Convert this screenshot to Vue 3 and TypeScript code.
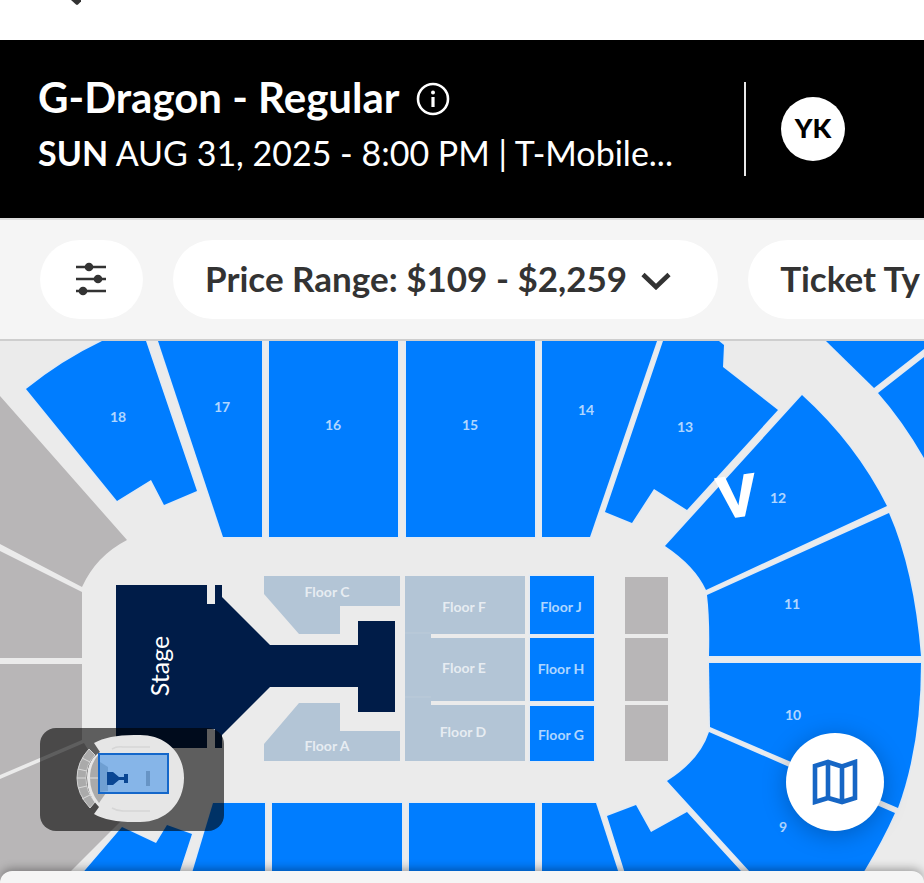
<script setup lang="ts">
interface Shape {
  id: string
  d: string
}
interface Label {
  text: string
  x: number
  y: number
}

const closedSections: Shape[] = [
  { id: 'w1', d: 'M0 396L127 540Q96 556 82 587L0 544Z' },
  { id: 'w2', d: 'M0 551L82 592V658H0Z' },
  { id: 'w3', d: 'M0 664H82V740L0 775Z' },
  { id: 'w4', d: 'M0 779L84 743Q102 776 140 802L115 827L72 870L60 883H0Z' },
  { id: 'r1', d: 'M625 577H668V634H625Z' },
  { id: 'r2', d: 'M625 638H668V701H625Z' },
  { id: 'r3', d: 'M625 705H668V761H625Z' },
]

const openSections: Shape[] = [
  { id: '18', d: 'M102 341Q62 360 26 389L117 501L151 480L164 505L197 491L146 341Z' },
  { id: '17', d: 'M158 341H262V537H223Z' },
  { id: '16', d: 'M269 341H398V537H269Z' },
  { id: '15', d: 'M406 341H535V537H406Z' },
  { id: '14', d: 'M542 341H657L590 537H542Z' },
  { id: '13', d: 'M663 341H719L724 345L723 367L778 410L687 510L654 489L632 523L605 512Z' },
  { id: '12', d: 'M802 395Q856 444 887 506L706 590Q695 566 665 546Z' },
  { id: '11', d: 'M889 513Q914 570 921 656H709Q710 620 707 595Z' },
  { id: '10', d: 'M709 663H921Q921 745 898 808L710 727Z' },
  { id: '9', d: 'M709 732L895 813Q883 840 865 870L856 883H760L667 781Q700 760 709 732Z' },
  { id: '8', d: 'M607 816L636 805L651 832L687 812L740 870L752 883H628Z' },
  { id: '7', d: 'M542 803H596L622 883H542Z' },
  { id: '6', d: 'M409 803H535V883H409Z' },
  { id: '5', d: 'M272 803H402V883H272Z' },
  { id: '4', d: 'M213 803H265V883H189Z' },
  { id: '3', d: 'M122 827L156 843L167 825L192 834L176 883H74Z' },
  { id: '112', d: 'M826 341L874 388L924 349V341Z' },
  { id: '111', d: 'M878 393Q902 420 924 458V357Z' },
  { id: 'J', d: 'M530 576H594V634H530Z' },
  { id: 'H', d: 'M530 638H594V701H530Z' },
  { id: 'G', d: 'M530 706H594V761H530Z' },
]

const soldSections: Shape[] = [
  { id: 'C', d: 'M264 576H400V606H340V634H299L264 594Z' },
  { id: 'A', d: 'M299 703H340V731H400V761H264V744Z' },
  { id: 'DEF', d: 'M405 576H525V634H431V638H525V701H431V705H525V761H405Z' },
]

const sectionLabels: Label[] = [
  { text: '18', x: 118, y: 422 },
  { text: '17', x: 222, y: 412 },
  { text: '16', x: 333, y: 430 },
  { text: '15', x: 470, y: 430 },
  { text: '14', x: 586, y: 415 },
  { text: '13', x: 685, y: 432 },
  { text: '12', x: 778, y: 503 },
  { text: '11', x: 792, y: 609 },
  { text: '10', x: 793, y: 720 },
  { text: '9', x: 783, y: 832 },
]

const floorLabels: Label[] = [
  { text: 'Floor C', x: 327, y: 597 },
  { text: 'Floor A', x: 327, y: 751 },
  { text: 'Floor F', x: 464, y: 612 },
  { text: 'Floor E', x: 464, y: 673 },
  { text: 'Floor D', x: 463, y: 737 },
  { text: 'Floor J', x: 561, y: 612 },
  { text: 'Floor H', x: 561, y: 674 },
  { text: 'Floor G', x: 561, y: 740 },
]
</script>

<template>
  <div class="page">
    <nav class="topbar">
      <button class="back" type="button" aria-label="Back">
        <svg width="16" height="6" viewBox="0 0 16 6"><path d="M3 0L8 4.600Q9 5.400 10 4.600L13 1.500V0Z" fill="#333" /></svg>
      </button>
    </nav>

    <header class="event">
      <div class="event-text">
        <h1 class="title">
          <span>G-Dragon - Regular</span>
          <button class="info" type="button" aria-label="Event information">
            <svg width="34" height="34" viewBox="0 0 34 34">
              <circle cx="17" cy="17" r="15" fill="none" stroke="#fff" stroke-width="2.600" />
              <circle cx="17" cy="10.500" r="2" fill="#fff" />
              <path d="M17 15V25" stroke="#fff" stroke-width="3.200" />
            </svg>
          </button>
        </h1>
        <p class="when"><strong>SUN</strong> AUG 31, 2025 - 8:00 PM | T-Mobile...</p>
      </div>
      <div class="account">
        <button class="avatar" type="button">YK</button>
      </div>
    </header>

    <div class="filters">
      <button class="pill pill-icon" type="button" aria-label="All filters">
        <svg width="32" height="34" viewBox="0 0 32 34" fill="#333" stroke="#333">
          <path d="M1 5H31M1 17H31M1 29H31" stroke-width="2.600" />
          <g stroke="none">
            <circle cx="14" cy="5" r="4.300" />
            <circle cx="23" cy="17" r="4.300" />
            <circle cx="8" cy="29" r="4.300" />
          </g>
        </svg>
      </button>
      <button class="pill" type="button">
        <span>Price Range: $109 - $2,259</span>
        <svg width="30" height="20" viewBox="0 0 30 20"><path d="M2 4.500L15 17L28 4.500" fill="none" stroke="#333" stroke-width="4.600" /></svg>
      </button>
      <button class="pill pill-wide" type="button">
        <span>Ticket Ty</span>
      </button>
    </div>

    <main class="map">
      <svg class="seats" viewBox="0 341 924 542" preserveAspectRatio="xMidYMid slice">
        <path v-for="s in closedSections" :key="s.id" :d="s.d" class="closed" />
        <path v-for="s in soldSections" :key="s.id" :d="s.d" class="sold" />
        <path d="M405 633H431M405 697H431" stroke="#bccbd9" stroke-width="1" />
        <path v-for="s in openSections" :key="s.id" :d="s.d" class="open" />
        <path
          class="stage"
          d="M116 585H207V604H215V585H222V597L270 645H358V621H395V712H358V687H270L222 735V748H215V729H207V748H116Z"
        />
        <text class="stage-label" transform="translate(169 666) rotate(-90)">Stage</text>
        <text v-for="l in sectionLabels" :key="l.text" class="label" :x="l.x" :y="l.y">{{ l.text }}</text>
        <text v-for="l in floorLabels" :key="l.text" class="label" :x="l.x" :y="l.y">{{ l.text }}</text>
        <text class="mark" transform="translate(740 516) rotate(-8)">V</text>
      </svg>

      <div class="minimap">
        <svg width="184" height="103" viewBox="40 728 184 103">
          <path d="M89 749Q77 762 77 778T90 808L95 802Q86 792 86 778T95 755Z" fill="#aaa" stroke="#d2d2d2" stroke-width="1" />
          <path d="M78 769L87 771M77 778H86M78 788L87 786M82 758L90 762M82 799L90 795" stroke="#d8d8d8" stroke-width="1" />
          <path d="M94 743Q108 735 134 735H140C166 735 184 753 184 778S166 822 140 822H134Q108 822 94 814L99 807Q87 796 87 778T100 752Z" fill="#e6e6e6" />
          <path d="M99 754Q90 764 90 778T99 803L108 790V766Z" fill="#aaa" />
          <path d="M89 778H106" stroke="#e0e0e0" stroke-width="1" />
          <path d="M112 749Q117 746 123 747H150M112 808Q117 811 123 811H150" fill="none" stroke="#d6d6d6" stroke-width="1.500" />
          <rect x="99" y="754" width="69" height="39" fill="#86b5e8" stroke="#1467ca" stroke-width="2" />
          <path d="M100 762L108 767V791L100 792Z" fill="#6f9fd2" />
          <path d="M107 772H113L119 777H124V774H128V783H124V780H119L113 785H107Z" fill="#0a4693" />
          <path d="M148 771V786" stroke="#6794c5" stroke-width="4" />
        </svg>
      </div>

      <button class="map-button" type="button" aria-label="Map view">
        <svg width="46" height="46" viewBox="0 0 46 46" fill="none" stroke="#1666c5" stroke-width="4.600">
          <path d="M3 7L16 3L30 7.500L43 3V39L30 43L16 39L3 43ZM16 3V39M30 7V43" />
        </svg>
      </button>

      <div class="sheet"></div>
    </main>
  </div>
</template>

<style>
body {
  margin: 0;
}
</style>

<style scoped>
.page {
  display: flex;
  flex-direction: column;
  min-height: 100vh;
  overflow: hidden;
  background: #ebebeb;
  font-family: Lato, 'Liberation Sans', sans-serif;
}
button {
  border: 0;
  padding: 0;
  font: inherit;
  cursor: pointer;
}
.topbar {
  height: 40px;
  padding-left: 68px;
  background: #fff;
}
.back {
  display: block;
  background: none;
}
.back svg,
.info svg {
  display: block;
}
.event {
  display: flex;
  align-items: center;
  justify-content: space-between;
  box-sizing: border-box;
  height: 178px;
  padding: 0 79px 0 38px;
  background: #000;
  color: #fff;
}
.event-text {
  min-width: 0;
  padding-bottom: 8px;
  white-space: nowrap;
}
.title {
  display: flex;
  align-items: center;
  gap: 17px;
  margin: 0;
  font-size: 42px;
  line-height: 56px;
  font-weight: 700;
}
.info {
  padding-top: 4px;
  background: none;
}
.when {
  margin: 0;
  font-size: 34px;
  line-height: 56px;
}
.account {
  display: flex;
  align-items: center;
  height: 94px;
  padding-left: 35px;
  border-left: 2px solid #e8e8e8;
}
.avatar {
  width: 64px;
  height: 64px;
  padding-bottom: 4px;
  border-radius: 50%;
  background: #fff;
  color: #000;
  font-size: 27px;
  font-weight: 900;
}
.filters {
  display: flex;
  gap: 30px;
  padding: 20px 0 20px 40px;
  overflow: hidden;
  border-top: 2px solid #dcdcdc;
  border-bottom: 2px solid #cecece;
  background: #f5f5f5;
}
.pill {
  display: flex;
  flex: none;
  align-items: center;
  gap: 14px;
  height: 79px;
  padding: 0 47px 0 32px;
  border-radius: 40px;
  background: #fff;
  color: #333;
  font-size: 35px;
  font-weight: 700;
  white-space: nowrap;
}
.pill span {
  padding-bottom: 4px;
}
.pill-icon {
  padding: 0 36px 2px 35px;
}
.pill-wide {
  min-width: 300px;
}
.map {
  position: relative;
  flex: 1;
  min-height: 480px;
  overflow: hidden;
}
.seats {
  position: absolute;
  inset: 0;
  width: 100%;
  height: 100%;
}
.closed {
  fill: #b8b6b7;
}
.sold {
  fill: #b3c5d6;
}
.open {
  fill: #007dff;
  stroke: #e2eaf4;
  stroke-width: 3px;
  paint-order: stroke;
}
.stage {
  fill: #001c48;
}
.stage-label {
  fill: #fff;
  font-size: 25px;
  text-anchor: middle;
}
.label {
  fill: #fff;
  fill-opacity: 0.7;
  font-size: 14px;
  font-weight: 700;
  text-anchor: middle;
}
.mark {
  fill: #fff;
  stroke: #fff;
  stroke-width: 2px;
  font-family: 'Liberation Sans', sans-serif;
  font-size: 58px;
  font-weight: 700;
  text-anchor: middle;
}
.minimap {
  position: absolute;
  left: 40px;
  bottom: 52px;
  overflow: hidden;
  border-radius: 16px;
  background: rgba(0, 0, 0, 0.6);
}
.minimap svg {
  display: block;
}
.map-button {
  position: absolute;
  right: 40px;
  bottom: 52px;
  display: grid;
  place-items: center;
  width: 98px;
  height: 98px;
  border-radius: 50%;
  background: #fff;
  box-shadow: 0 4px 24px rgba(0, 0, 0, 0.25);
}
.sheet {
  position: absolute;
  inset: auto 0 0;
  height: 12px;
  border-radius: 24px 24px 0 0;
  background: #f5f5f5;
  box-shadow: 0 -2px 10px rgba(0, 0, 0, 0.35);
}
</style>
